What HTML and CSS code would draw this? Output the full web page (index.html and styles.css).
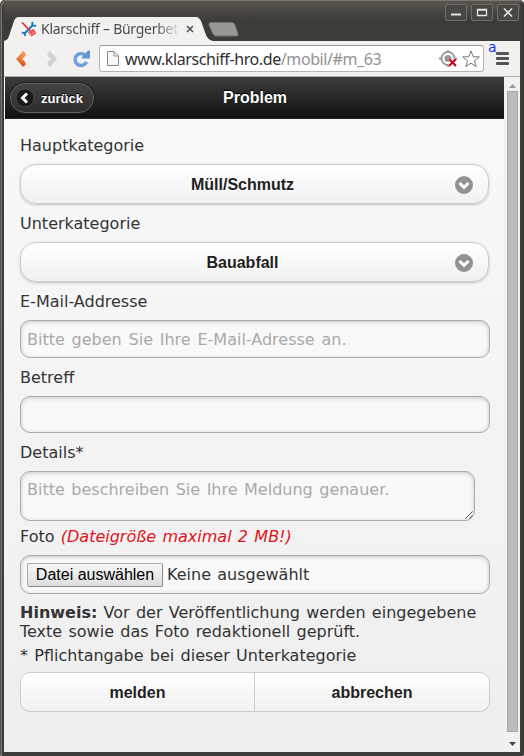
FILE: index.html
```html
<!DOCTYPE html>
<html lang="de">
<head>
<meta charset="utf-8">
<title>Klarschiff – Bürgerbeteiligung</title>
<link rel="stylesheet" href="styles.css">
</head>
<body>
<div class="window">
  <div class="titlebar">
    <div class="tab">
      <svg class="tab-shape" width="196" height="24" viewBox="0 0 196 24"><path d="M0 24C3 23 4 22 5 19L10 4Q11.500 0 15 0H192Q195 0 197 4L202 18Q204 23 209 24Z" fill="#f2f1f0"/></svg>
      <svg class="favicon" width="16" height="16" viewBox="0 0 16 16"><path d="M3.500 12.500L11.500 4.500" fill="none" stroke="#1678be" stroke-width="2"/><path d="M.8 11.500l2.700.8.800 2.700M11.500.8l-.3 3.700 4 .3" fill="none" stroke="#1678be" stroke-width="1.800"/><path d="M1 1.500l8 8" stroke="#e22b35" stroke-width="1.700"/><path d="M7 11l5-3 3.500 4-5 3.500z" fill="#f08288"/><path d="M8.500 13l5.500-3.500M7.500 11.500l5-3M10 15l5-3" stroke="#e22b35" stroke-width=".9"/></svg>
      <span class="tab-title">Klarschiff – Bürgerbet</span>
      <svg class="tab-close" width="8" height="8" viewBox="0 0 8 8"><path d="M1 1l6 6M7 1L1 7" stroke="#595959" stroke-width="1.700"/></svg>
    </div>
    <svg class="new-tab" width="32" height="15" viewBox="0 0 32 15"><path d="M3 .5H24Q26 .5 27 3L30 12Q30.500 14 29 14H8Q6 14 5 12L1 3Q.500 .5 3 .5Z" fill="#999896" stroke="#75736e"/></svg>
    <div class="controls">
      <span class="ctl"><svg width="20" height="15"><path d="M5 9.500h10" stroke="#e5e4df" stroke-width="2"/></svg></span>
      <span class="ctl"><svg width="20" height="15"><path d="M5.500 4.500h9v6h-9zM5 5h10" fill="none" stroke="#e5e4df" stroke-width="1.300"/></svg></span>
      <span class="ctl"><svg width="20" height="15"><path d="M6 3.500l8 8M14 3.500l-8 8" stroke="#e5e4df" stroke-width="1.600"/></svg></span>
    </div>
  </div>
  <div class="toolbar">
    <svg class="nav" width="78" height="20" viewBox="0 0 78 20">
      <defs><linearGradient id="o" x2="0" y2="1"><stop stop-color="#f6a467"/><stop offset="1" stop-color="#da4d18"/></linearGradient></defs>
      <path d="M8 2L1 10l7 8 2.500-2.200V13.500L7.200 10l3.300-3.500V4z" fill="url(#o)"/>
      <path d="M35 2l7 8-7 8-2.500-2.200V13.500L35.800 10l-3.300-3.500V4z" fill="#d3d2d1"/>
      <path d="M70.500 6.500A6 6 0 1 0 71.500 13" fill="none" stroke="#6da3d8" stroke-width="3.600"/><path d="M66.500 9.500l1-2 5.500-6h2v8z" fill="#6099d1"/>
    </svg>
    <div class="address">
      <svg width="12" height="16" viewBox="0 0 12 16"><path d="M.5.500H7L11.500 5V14.500H.5zM7 .5V5h4.500" fill="#f8f8f8" stroke="#888"/></svg>
      <span class="url">www.klarschiff-hro.de<span class="path">/mobil/#m_63</span></span>
      <svg class="locate" width="19" height="18" viewBox="0 0 19 18"><circle cx="9" cy="8.500" r="6.500" fill="none" stroke="#999" stroke-width="1.800"/><circle cx="9" cy="8.500" r="3.600" fill="#999"/><path d="M0 8.500h3M15 8.500h3M9 0v3M9 14v3" stroke="#999" stroke-width="1.800"/><path d="M10 9l7 7M17 9l-7 7" stroke="#fff" stroke-width="3"/><path d="M10 9l7 7M17 9l-7 7" stroke="#c60012" stroke-width="2"/></svg>
      <svg class="star" width="18" height="18" viewBox="0 0 18 18"><path d="M9 1l2.200 5.700 6.100.2-4.800 3.800 1.700 5.900L9 13.200 3.800 16.600l1.700-5.900L.7 6.900l6.100-.2z" fill="#fff" stroke="#777"/></svg>
    </div>
    <div class="menu"><i></i><i></i><i></i><span class="marker">a</span></div>
  </div>
  <div class="viewport">
    <div class="page">
      <header class="header">
        <a class="back"><svg width="20" height="20" viewBox="0 0 20 20"><circle cx="10" cy="10" r="9" fill="#191919" stroke="#454545"/><path d="M12 5.500L7.500 10l4.500 4.500" fill="none" stroke="#fff" stroke-width="3"/></svg><span>zurück</span></a>
        <h1>Problem</h1>
      </header>
      <form class="form">
        <label>Hauptkategorie</label>
        <div class="select"><span>Müll/Schmutz</span><svg width="18" height="18" viewBox="0 0 18 18"><circle cx="9" cy="9" r="9" fill="#929292"/><path d="M4.500 7L9 11.500 13.500 7" fill="none" stroke="#fff" stroke-width="3"/></svg></div>
        <label>Unterkategorie</label>
        <div class="select"><span>Bauabfall</span><svg width="18" height="18" viewBox="0 0 18 18"><circle cx="9" cy="9" r="9" fill="#929292"/><path d="M4.500 7L9 11.500 13.500 7" fill="none" stroke="#fff" stroke-width="3"/></svg></div>
        <label>E-Mail-Addresse</label>
        <input class="field" placeholder="Bitte geben Sie Ihre E-Mail-Adresse an.">
        <label>Betreff</label>
        <input class="field short">
        <label>Details*</label>
        <div class="details field"><span>Bitte beschreiben Sie Ihre Meldung genauer.</span><svg width="8" height="8" viewBox="0 0 8 8"><path d="M.5 7.500l7-7M4.500 7.500l3-3" stroke="#555"/></svg></div>
        <label>Foto <em>(Dateigröße maximal 2 MB!)</em></label>
        <div class="file field"><button type="button">Datei auswählen</button><span>Keine ausgewählt</span></div>
        <p class="hint"><b>Hinweis:</b> Vor der Veröffentlichung werden eingegebene<br>Texte sowie das Foto redaktionell geprüft.</p>
        <p class="required">* Pflichtangabe bei dieser Unterkategorie</p>
        <div class="actions"><a>melden</a><a>abbrechen</a></div>
      </form>
    </div>
    <div class="scrollbar">
      <svg width="7" height="4"><path d="M0 4L3.500 0 7 4z" fill="#999"/></svg>
      <div class="thumb"></div>
      <svg width="7" height="4"><path d="M0 0L3.500 4 7 0z" fill="#444"/></svg>
    </div>
  </div>
</div>
</body>
</html>
```
FILE: styles.css
```css
* { box-sizing: border-box; }
body { margin: 0; background: #fff; overflow: hidden; }
svg { display: block; flex: none; }
.window {
  width: 524px; height: 756px; padding: 0 4px 4px;
  display: flex; flex-direction: column;
  background: #3f3d38; border-radius: 5px 5px 2px 2px;
  box-shadow: inset 1px 1px #55534d, inset 2px 2px #787671, inset -1px 0 #35342f;
}
.titlebar {
  height: 41px; display: flex; align-items: flex-start;
  background: linear-gradient(#55534c 2px, #3d3b36 20px);
  border-top: 1px solid #77756f;
}
.tab { width: 204px; height: 24px; margin-top: 16px; display: flex; align-items: center; position: relative; padding-left: 17px; flex: none; }
.tab-shape { position: absolute; left: 0; top: 0; overflow: visible; }
.favicon { position: relative; margin-top: -1px; }
.tab-title {
  position: relative; width: 138px; margin-left: 4px; overflow: hidden; white-space: nowrap;
  font: 14px/20px "Noto Sans", sans-serif; letter-spacing: -.26px; color: #4c4c4c;
  -webkit-mask-image: linear-gradient(90deg, #000 115px, transparent 139px);
}
.tab-close { position: relative; margin-left: 7px; }
.new-tab { margin-top: 21px; }
.controls { margin: 3px 1px 0 auto; display: flex; gap: 4px; }
.ctl { width: 22px; height: 17px; border: 1px solid #706e68; border-radius: 2px; background: #494741; }
.toolbar {
  height: 36px; background: #f2f1f0; border-bottom: 1px solid #b1b0af;
  display: flex; align-items: center; padding-left: 11px;
}
.nav { margin-right: 6px; }
.address {
  width: 385px; height: 27px; border: 1px solid #b5b4b3; border-top-color: #999; border-radius: 3px; background: #fff;
  display: flex; align-items: center; padding: 0 3px 0 7px;
}
.url { margin-left: 6px; font: 16px/24px "Noto Sans", sans-serif; letter-spacing: -.4px; color: #303030; white-space: nowrap; }
.path { color: #929292; }
.locate { margin-left: auto; }
.star { margin-left: 4px; }
.menu { position: relative; margin-left: 12px; display: grid; gap: 2px; }
.menu i { width: 13px; height: 3px; border-radius: 1px; background: #555; }
.marker { position: absolute; left: -8px; top: -13px; font: 14px/16px "DejaVu Sans", sans-serif; color: #1230ee; }
.viewport { flex: 1; display: flex; background: #f1f1f1; min-height: 0; }
.page { width: 500px; background: linear-gradient(#f9f9f9 42px, #eee); color: #333; font: 16px/19px "DejaVu Sans", sans-serif; word-spacing: 1.200px; }
.header {
  height: 42px; margin-left: 1px; display: grid; grid-template-columns: 92px 1fr 91px; align-items: center;
  background: linear-gradient(#3c3c3c, #111); border-bottom: 1px solid #222;
  color: #fff; font-family: "Liberation Sans", sans-serif; text-shadow: 0 -1px 1px #000;
}
.header h1 { margin: 0; text-align: center; font-size: 16px; line-height: 20px; }
.back {
  width: 84px; height: 30px; margin-left: 5px; padding-left: 4px; display: flex; align-items: center; gap: 6px;
  border: 1px solid #606060; border-radius: 16px; background: linear-gradient(#444, #2d2d2d);
  box-shadow: 0 0 0 1px #202020; font-size: 13px; font-weight: bold;
}
.back span { padding-top: 1px; }
.form { margin: 0; padding: 17px 14px 0 16px; }
label { display: block; height: 19px; margin-bottom: 9px; white-space: nowrap; }
em { color: #de141c; }
.select {
  width: 469px; height: 40px; margin-bottom: 10px; padding: 0 15px; display: flex; align-items: center;
  border: 1px solid #ccc; border-radius: 16px; background: linear-gradient(#fff, #f1f1f1);
  box-shadow: 0 1px 3px rgba(0,0,0,.22);
}
.select span { flex: 1; text-align: center; padding-right: 6px; }
.select svg { margin-top: 2px; }
.select, .actions { font-family: "Liberation Sans", sans-serif; font-weight: bold; color: #222; text-shadow: 0 1px 0 #fff; }
.field {
  display: block; width: 470px; height: 38px; margin: 0 0 10px; padding: 0 6px; outline: 0;
  border: 1px solid #aaa; border-radius: 10px; background: #f9f9f9; box-shadow: inset 0 1px 4px rgba(0,0,0,.2);
  font: 16px/19px "DejaVu Sans", sans-serif; color: #333;
}
input.field { word-spacing: 1.700px; }
.field::placeholder { color: #a9a9a9; opacity: 1; }
.short { height: 37px; }
.details { width: 455px; height: 50px; margin-bottom: 6px; padding-top: 8px; color: #a9a9a9; position: relative; word-spacing: 1.400px; }
.details svg { position: absolute; right: 1px; bottom: 1px; }
.file { height: 39px; margin-bottom: 9px; display: flex; align-items: center; gap: 4px; }
.file button {
  width: 136px; height: 24px; padding: 0; border: 1px solid #999; border-color: #a9a9a9 #888 #888 #a9a9a9; border-radius: 2px;
  background: linear-gradient(#f6f6f6, #dedede); font: 16px/20px "Liberation Sans", sans-serif; color: #000;
}
p { margin: 0; white-space: nowrap; }
.hint { margin-bottom: 5px; }
.required { margin-bottom: 7px; }
.actions { width: 470px; height: 40px; display: grid; grid-template-columns: 233px 1fr; border: 1px solid #ccc; border-radius: 10px; background: linear-gradient(#fff, #f1f1f1); }
.actions a { display: grid; place-items: center; }
.actions a + a { border-left: 1px solid #ccc; }
.scrollbar { width: 16px; padding: 7px 0 6px; display: flex; flex-direction: column; align-items: center; justify-content: space-between; background: #f1f1f1; }
.thumb { flex: 1; width: 11px; margin: 3px 0 10px; background: #bcbcbc; border: 1px solid #a8a8a8; }
```
